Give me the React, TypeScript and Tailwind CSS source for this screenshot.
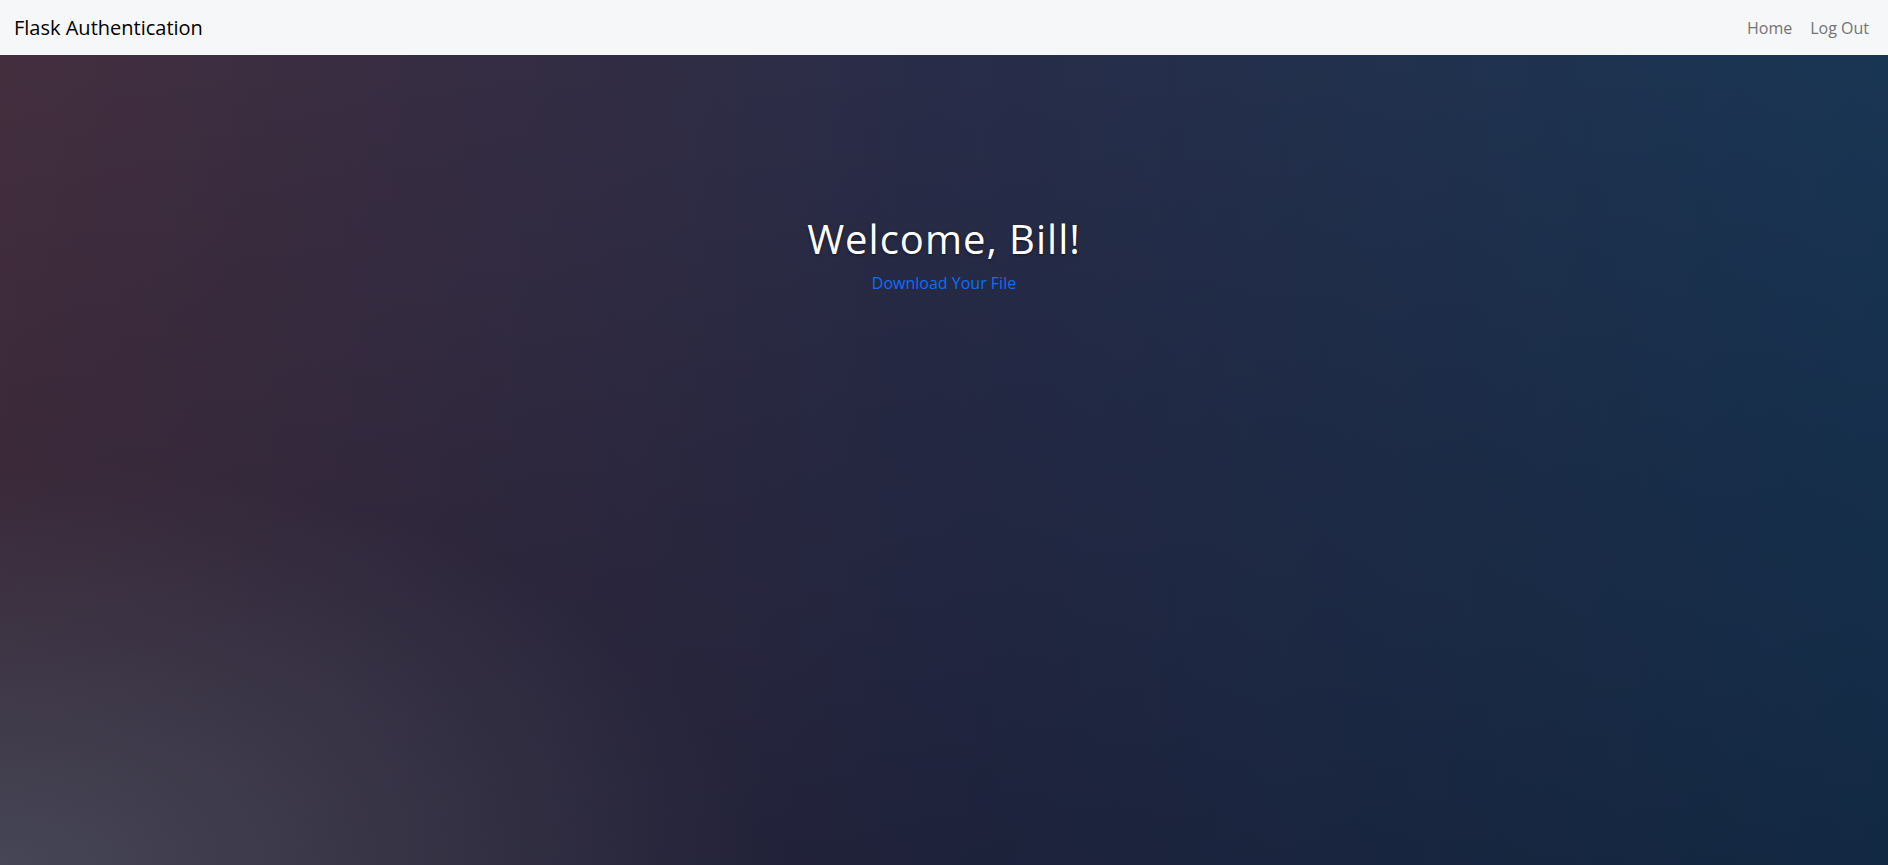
import React from 'react';

export default function App() {
  return (
    <div className="min-h-screen flex flex-col font-['Open_Sans',sans-serif]">
      {/* Navbar */}
      <nav className="h-[55px] bg-[#f6f7f9] flex items-center justify-between px-[14px]">
        <a href="#" className="text-[20px] text-black leading-[30px]">Flask Authentication</a>
        <div className="flex items-center gap-[18px] pr-[5px]">
          <a href="#" className="text-[16px] text-[#737373]">Home</a>
          <a href="#" className="text-[16px] text-[#737373]">Log Out</a>
        </div>
      </nav>

      {/* Hero */}
      <main className="flex-1 bg-[radial-gradient(ellipse_40%_50%_at_0%_100%,rgba(72,74,90,0.9),transparent),linear-gradient(to_bottom,transparent,rgba(0,4,20,0.25)),linear-gradient(to_right,#432e3e,#282c48_50%,#183553)] flex flex-col items-center pt-[160px]">
        <h1 className="text-[40px] leading-[48px] tracking-[1px] text-white mb-2 [text-shadow:0_1px_3px_rgba(0,0,0,0.45)]">Welcome, Bill!</h1>
        <a href="#" className="text-[16px] leading-6 text-[#0d6efd]">Download Your File</a>
      </main>
    </div>
  );
}
